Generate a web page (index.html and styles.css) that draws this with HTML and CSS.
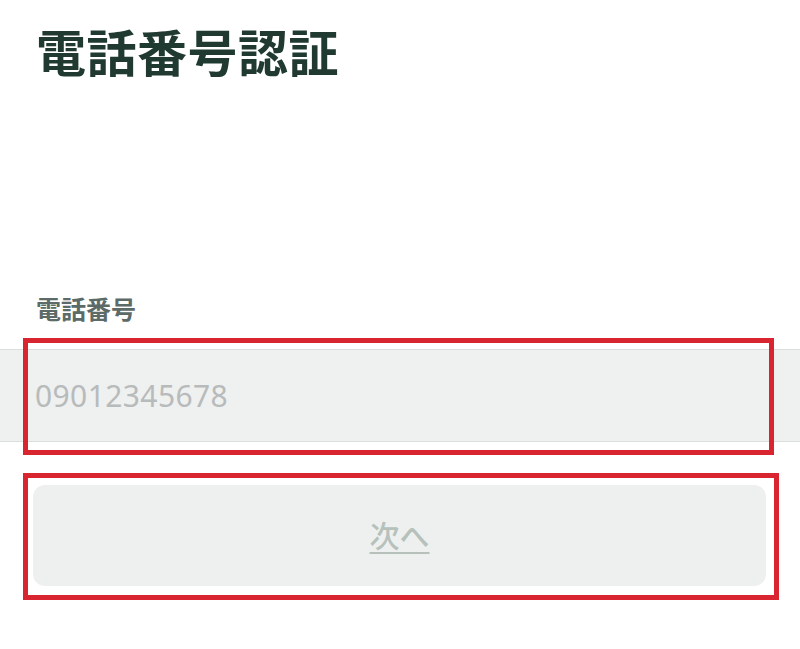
FILE: index.html
```html
<!DOCTYPE html>
<html lang="ja">
<head>
<meta charset="utf-8">
<title>電話番号認証</title>
<link rel="stylesheet" href="styles.css">
</head>
<body>
<main class="page">
  <h1 class="title">電話番号認証</h1>
  <label class="field-label" for="phone">電話番号</label>
  <div class="input-band">
    <span class="placeholder" id="phone">09012345678</span>
  </div>
  <div class="btn-row">
    <button class="next-btn" type="button"><span class="next-text">次へ</span></button>
  </div>
  <div class="annot annot-input"></div>
  <div class="annot annot-btn"></div>
</main>
</body>
</html>
```

FILE: styles.css
```css
html, body {
  margin: 0;
  padding: 0;
  background: #ffffff;
}

.page {
  position: relative;
  width: 800px;
  height: 649px;
  overflow: hidden;
  font-family: "Noto Sans CJK JP", "Noto Sans", sans-serif;
}

.title {
  margin: 0;
  padding: 21px 0 0 36px;
  font-size: 50px;
  line-height: 58px;
  font-weight: 700;
  color: #203a31;
  letter-spacing: 0.5px;
}

.field-label {
  display: block;
  margin: 0;
  padding: 213px 0 0 36px;
  font-size: 25px;
  line-height: 32px;
  font-weight: 700;
  color: #5c6b67;
}

.input-band {
  margin-top: 25px;
  height: 91px;
  background: #eff0f0;
  border-top: 1px solid #dadedd;
  border-bottom: 1px solid #dadedd;
  display: flex;
  align-items: center;
  padding-left: 35px;
}

.placeholder {
  font-family: "Noto Sans", "Noto Sans CJK JP", sans-serif;
  font-size: 30px;
  color: #b8bbbb;
  letter-spacing: 0.4px;
}

.btn-row {
  padding: 43px 34px 0 33px;
}

.next-btn {
  display: flex;
  align-items: center;
  justify-content: center;
  width: 100%;
  height: 101px;
  border: none;
  border-radius: 12px;
  background: #eef0ef;
  padding: 0 0 4px 0;
  font-family: "Noto Sans CJK JP", sans-serif;
}

.next-text {
  font-size: 30px;
  font-weight: 500;
  color: #b6c1bc;
  text-decoration: underline;
  text-decoration-thickness: 2px;
  text-underline-offset: 5px;
}

.annot {
  position: absolute;
  border: 5px solid #d92530;
  box-sizing: border-box;
}

.annot-input {
  left: 23px;
  top: 338px;
  width: 751px;
  height: 117px;
}

.annot-btn {
  left: 23px;
  top: 473px;
  width: 756px;
  height: 127px;
}
```
